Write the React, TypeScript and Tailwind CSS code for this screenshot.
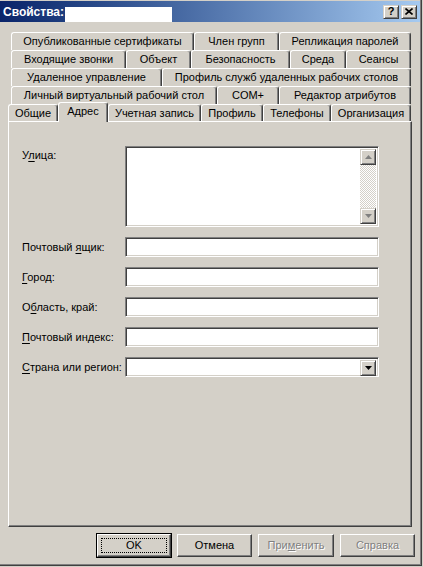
import React from 'react';

const raised =
  'bg-[#d4d0c8] border border-t-white border-l-white border-r-[#404040] border-b-[#404040] shadow-[inset_-1px_-1px_0_#808080]';
const sunken =
  'bg-white border border-t-[#808080] border-l-[#808080] border-r-white border-b-white shadow-[inset_1px_1px_0_#404040,inset_-1px_-1px_0_#d4d0c8]';
const smallBtn =
  'bg-[#d4d0c8] border border-t-[#d4d0c8] border-l-[#d4d0c8] border-r-[#404040] border-b-[#404040] shadow-[inset_1px_1px_0_#fff,inset_-1px_-1px_0_#808080]';

type TabDef = { label: string; w: number };

const rows: TabDef[][] = [
  [
    { label: 'Опубликованные сертификаты', w: 183 },
    { label: 'Член групп', w: 85 },
    { label: 'Репликация паролей', w: 132 },
  ],
  [
    { label: 'Входящие звонки', w: 115 },
    { label: 'Объект', w: 65 },
    { label: 'Безопасность', w: 99 },
    { label: 'Среда', w: 56 },
    { label: 'Сеансы', w: 65 },
  ],
  [
    { label: 'Удаленное управление', w: 151 },
    { label: 'Профиль служб удаленных рабочих столов', w: 249 },
  ],
  [
    { label: 'Личный виртуальный рабочий стол', w: 206 },
    { label: 'COM+', w: 62 },
    { label: 'Редактор атрибутов', w: 132 },
  ],
];

const frontRow: TabDef[] = [
  { label: 'Общие', w: 50 },
  { label: 'Адрес', w: 50 },
  { label: 'Учетная запись', w: 93 },
  { label: 'Профиль', w: 62 },
  { label: 'Телефоны', w: 68 },
  { label: 'Организация', w: 80 },
];

const Tab: React.FC<{ tab: TabDef; selected?: boolean }> = ({ tab, selected }) => (
  <div
    className={
      selected
        ? 'relative z-10 -mb-px flex h-[20px] shrink-0 items-start justify-center rounded-t-[3px] border-t border-l border-r border-t-white border-l-white border-r-[#404040] bg-[#d4d0c8] pt-[3px] shadow-[inset_-1px_0_0_#808080]'
        : 'flex h-full shrink-0 items-center justify-center rounded-t-[3px] border-t border-l border-r border-t-white border-l-white border-r-[#404040] bg-[#d4d0c8] shadow-[inset_-1px_0_0_#808080]'
    }
    style={{ width: tab.w }}
  >
    <span className="whitespace-nowrap leading-none">{tab.label}</span>
  </div>
);

const Label: React.FC<{ before?: string; key_: string; after: string }> = ({ before, key_, after }) => (
  <span className="whitespace-nowrap">
    {before}
    <u className="underline-offset-[2px]">{key_}</u>
    {after}
  </span>
);

const TriUp = ({ color = '#808080' }: { color?: string }) => (
  <svg width="7" height="4" viewBox="0 0 7 4">
    <path d="M3.5 0 L7 4 L0 4 Z" fill={color} />
  </svg>
);

const TriDown = ({ color = '#808080' }: { color?: string }) => (
  <svg width="7" height="4" viewBox="0 0 7 4">
    <path d="M0 0 L7 0 L3.5 4 Z" fill={color} />
  </svg>
);

const FieldRow: React.FC<{ label: React.ReactNode; children?: React.ReactNode }> = ({ label, children }) => (
  <div className="flex h-[20px] items-center">
    <div className="w-[103px] pt-[1px]">{label}</div>
    {children ?? <div className={`h-[20px] w-[254px] ${sunken}`} />}
  </div>
);

export default function App() {
  return (
    <div className="h-[567px] w-[423px] overflow-hidden bg-[#d4d0c8] font-['Liberation_Sans',Arial,sans-serif] text-[11px] text-black">
      <div className="flex h-[566px] w-[422px] flex-col border-r border-b border-r-[#404040] border-b-[#404040] shadow-[inset_-1px_-1px_0_#808080]">
        {/* title bar */}
        <div className="mt-px flex h-[21px] w-[420px] items-center bg-gradient-to-r from-[#0a246a] to-[#a6caf0]">
          <span className="ml-[3px] text-[12px] font-bold text-white">Свойства:</span>
          <div className="ml-[1px] mt-[6px] h-[15px] w-[107px] bg-white" />
          <div className="ml-auto mr-[3px] flex gap-[2px]">
            <div className={`flex h-[14px] w-[16px] items-center justify-center text-[11px] font-bold leading-none ${smallBtn}`}>?</div>
            <div className={`flex h-[14px] w-[16px] items-center justify-center ${smallBtn}`}>
              <svg width="8" height="7" viewBox="0 0 8 7">
                <path d="M0.5 0.5 L7.5 6.5 M7.5 0.5 L0.5 6.5" stroke="#000" strokeWidth="1.6" />
              </svg>
            </div>
          </div>
        </div>

        {/* tabs */}
        <div className="mt-[10px] flex flex-col">
          {rows.map((r, i) => (
            <div key={i} className="ml-[11px] flex h-[18px]">
              {r.map(t => (
                <Tab key={t.label} tab={t} />
              ))}
            </div>
          ))}
          <div className="ml-[8px] flex h-[17px] items-end">
            {frontRow.map(t => (
              <Tab key={t.label} tab={t} selected={t.label === 'Адрес'} />
            ))}
          </div>
        </div>

        {/* page */}
        <div className="ml-[8px] h-[406px] w-[404px] border border-t-white border-l-white border-r-[#404040] border-b-[#404040] pl-[13px] pt-[24px] shadow-[inset_-1px_-1px_0_#808080]">
          <div className="flex flex-col gap-[10px]">
            <div className="flex h-[81px]">
              <div className="w-[103px] pt-[1px]">
                <Label before="У" key_="л" after="ица:" />
              </div>
              <div className={`flex h-[81px] w-[254px] justify-end p-[2px] ${sunken}`}>
                <div className="flex w-[16px] flex-col">
                  <div className={`flex h-[16px] items-center justify-center ${smallBtn}`}>
                    <TriUp />
                  </div>
                  <div className="flex-1 bg-[repeating-conic-gradient(#d4d0c8_0%_25%,#ffffff_0%_50%)] bg-size-[2px_2px]" />
                  <div className={`flex h-[16px] items-center justify-center ${smallBtn}`}>
                    <TriDown />
                  </div>
                </div>
              </div>
            </div>
            <FieldRow label={<Label before="Почтовый " key_="я" after="щик:" />} />
            <FieldRow label={<Label key_="Г" after="ород:" />} />
            <FieldRow label={<Label before="О" key_="б" after="ласть, край:" />} />
            <FieldRow label={<Label key_="П" after="очтовый индекс:" />} />
            <FieldRow label={<Label key_="С" after="трана или регион:" />}>
              <div className={`flex h-[20px] w-[254px] justify-end p-[2px] ${sunken}`}>
                <div className={`flex h-[16px] w-[16px] items-center justify-center ${smallBtn}`}>
                  <TriDown color="#000" />
                </div>
              </div>
            </FieldRow>
          </div>
        </div>

        {/* buttons */}
        <div className="ml-[96px] mt-[6px] flex items-center gap-[5px]">
          <div className="h-[25px] w-[76px] border border-black">
            <div className={`flex h-full w-full items-center justify-center p-[3px] ${raised}`}>
              <div className="flex h-full w-full items-center justify-center border border-dotted border-black">OK</div>
            </div>
          </div>
          <div className={`flex h-[23px] w-[75px] items-center justify-center ${raised}`}>Отмена</div>
          <div className={`ml-[1px] flex h-[23px] w-[76px] items-center justify-center text-[#808080] [text-shadow:1px_1px_0_#fff] ${raised}`}>
            <span>
              При<u>м</u>енить
            </span>
          </div>
          <div className={`ml-[1px] flex h-[23px] w-[75px] items-center justify-center text-[#808080] [text-shadow:1px_1px_0_#fff] ${raised}`}>
            Справка
          </div>
        </div>
      </div>
    </div>
  );
}
